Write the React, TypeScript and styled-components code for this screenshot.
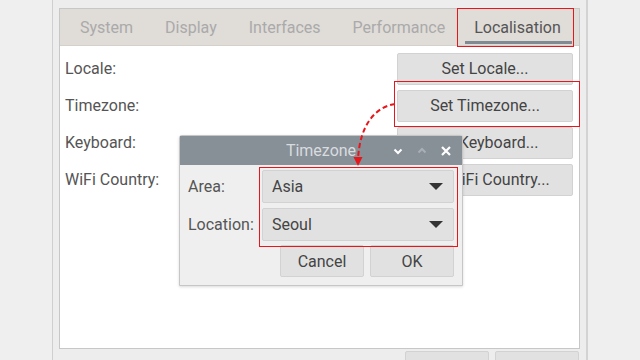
import { createGlobalStyle, styled } from "styled-components";

const GlobalStyle = createGlobalStyle`
  html, body {
    margin: 0;
    padding: 0;
    background: #efefef;
    font-family: Roboto, "Liberation Sans", sans-serif;
  }
`;

const Page = styled.div`
  position: relative;
  width: 640px;
  height: 360px;
  overflow: hidden;
  background: #efefef;
`;

const Window = styled.div`
  margin-left: 52px;
  width: 536px;
  height: 360px;
  box-sizing: border-box;
  border-left: 1px solid #cfcfcf;
  border-right: 2px solid #d3d3d3;
  background: #ededed;
  padding: 8px 6px 0 6px;
  display: flex;
  flex-direction: column;
`;

const Notebook = styled.div`
  border: 1px solid #c7c7c7;
  display: flex;
  flex-direction: column;
  flex-shrink: 0;
  height: 341px;
  box-sizing: border-box;
`;

const TabBar = styled.div`
  display: flex;
  height: 36px;
  background: #e0dcd8;
  border-bottom: 1px solid #d4d0cc;
  padding-left: 4px;
`;

const Tab = styled.div<{ $active?: boolean }>`
  position: relative;
  display: flex;
  align-items: center;
  padding: 0 ${(p) => (p.$active ? "13px" : "16px")};
  font-size: 16px;
  color: ${(p) => (p.$active ? "#555" : "#aaa")};

  ${(p) =>
    p.$active &&
    `
    &::after {
      content: "";
      position: absolute;
      left: 4px;
      right: 2px;
      bottom: 1px;
      height: 3px;
      background: #7f8a93;
    }
  `}
`;

const Content = styled.div`
  flex: 1;
  background: #fff;
  padding: 6px 6px 0 5px;
  display: flex;
  flex-direction: column;
  gap: 4px;
`;

const Row = styled.div`
  display: flex;
  align-items: center;
  justify-content: space-between;
  height: 33px;
`;

const Label = styled.span`
  font-size: 16px;
  color: #555;
`;

const Button = styled.div<{ $width?: number }>`
  width: ${(p) => p.$width ?? 176}px;
  height: 32px;
  flex-shrink: 0;
  box-sizing: border-box;
  display: flex;
  align-items: center;
  justify-content: center;
  background: #e1e1e1;
  border: 1px solid #d2d2d2;
  border-radius: 2px;
  font-size: 16px;
  color: #444;
`;

const BottomBar = styled.div`
  display: flex;
  justify-content: flex-end;
  gap: 6px;
  padding: 2px 1px 0 0;
`;

const Highlight = styled.div`
  position: absolute;
  border: 1px solid #e8161b;
  pointer-events: none;
`;

const Dialog = styled.div`
  position: absolute;
  left: 179px;
  top: 135px;
  width: 284px;
  height: 151px;
  box-sizing: border-box;
  border: 1px solid #c6c6c6;
  border-radius: 3px 3px 0 0;
  background: #efefef;
  box-shadow: 0 1px 3px rgba(0, 0, 0, 0.15);
  display: flex;
  flex-direction: column;
`;

const TitleBar = styled.div`
  position: relative;
  height: 29px;
  background: #878f97;
  display: flex;
  align-items: center;
  justify-content: center;
  font-size: 16px;
  color: #d9dcdf;
`;

const TitleButtons = styled.div`
  position: absolute;
  right: 10px;
  top: 0;
  height: 29px;
  display: flex;
  align-items: center;
  gap: 12px;
`;

const DialogBody = styled.div`
  padding: 5px 8px 0 8px;
  display: flex;
  flex-direction: column;
  gap: 5px;
`;

const FieldRow = styled.div`
  display: flex;
  align-items: center;
`;

const FieldLabel = styled.span`
  width: 74px;
  font-size: 16px;
  color: #555;
`;

const Combo = styled.div`
  flex: 1;
  height: 33px;
  box-sizing: border-box;
  display: flex;
  align-items: center;
  justify-content: space-between;
  padding: 0 10px 0 9px;
  background: #e1e1e1;
  border: 1px solid #d2d2d2;
  border-radius: 2px;
  font-size: 16px;
  color: #444;
`;

const Caret = styled.span`
  width: 0;
  height: 0;
  border-left: 7px solid transparent;
  border-right: 7px solid transparent;
  border-top: 7px solid #333;
`;

const DialogActions = styled.div`
  display: flex;
  justify-content: flex-end;
  gap: 6px;
  margin-top: -1px;
`;

function App() {
  return (
    <Page>
      <GlobalStyle />
      <Window>
        <Notebook>
          <TabBar>
            <Tab>System</Tab>
            <Tab>Display</Tab>
            <Tab>Interfaces</Tab>
            <Tab>Performance</Tab>
            <Tab $active>Localisation</Tab>
          </TabBar>
          <Content>
            <Row>
              <Label>Locale:</Label>
              <Button>Set Locale...</Button>
            </Row>
            <Row>
              <Label>Timezone:</Label>
              <Button>Set Timezone...</Button>
            </Row>
            <Row>
              <Label>Keyboard:</Label>
              <Button>Set Keyboard...</Button>
            </Row>
            <Row>
              <Label>WiFi Country:</Label>
              <Button>Set WiFi Country...</Button>
            </Row>
          </Content>
        </Notebook>
        <BottomBar>
          <Button $width={84}>Cancel</Button>
          <Button $width={84}>OK</Button>
        </BottomBar>
      </Window>

      <Highlight style={{ left: 457, top: 8, width: 115, height: 37 }} />
      <Highlight style={{ left: 394, top: 81, width: 184, height: 44 }} />

      <Dialog>
        <TitleBar>
          Timezone
          <TitleButtons>
            <svg width="12" height="12" viewBox="0 0 12 12">
              <path d="M2.5 4.5 L6 8 L9.5 4.5" fill="none" stroke="#fff" strokeWidth="2" />
            </svg>
            <svg width="12" height="12" viewBox="0 0 12 12">
              <path d="M2.5 7.5 L6 4 L9.5 7.5" fill="none" stroke="#a9afb5" strokeWidth="2" />
            </svg>
            <svg width="12" height="12" viewBox="0 0 12 12">
              <path d="M2 2 L10 10 M10 2 L2 10" fill="none" stroke="#fff" strokeWidth="2.2" />
            </svg>
          </TitleButtons>
        </TitleBar>
        <DialogBody>
          <FieldRow>
            <FieldLabel>Area:</FieldLabel>
            <Combo>
              Asia
              <Caret />
            </Combo>
          </FieldRow>
          <FieldRow>
            <FieldLabel>Location:</FieldLabel>
            <Combo>
              Seoul
              <Caret />
            </Combo>
          </FieldRow>
          <DialogActions>
            <Button $width={84}>Cancel</Button>
            <Button $width={84}>OK</Button>
          </DialogActions>
        </DialogBody>
      </Dialog>

      <Highlight style={{ left: 259, top: 167, width: 197, height: 78 }} />

      <svg
        width="60"
        height="80"
        viewBox="0 0 60 80"
        style={{ position: "absolute", left: 345, top: 95, pointerEvents: "none" }}
      >
        <path
          d="M50 9 C 30 12, 15 30, 13 64"
          fill="none"
          stroke="#e8161b"
          strokeWidth="2"
          strokeDasharray="5 3"
        />
        <path d="M8.5 62 L13 71 L17.5 62 Z" fill="#e8161b" />
      </svg>
    </Page>
  );
}

export default App;
